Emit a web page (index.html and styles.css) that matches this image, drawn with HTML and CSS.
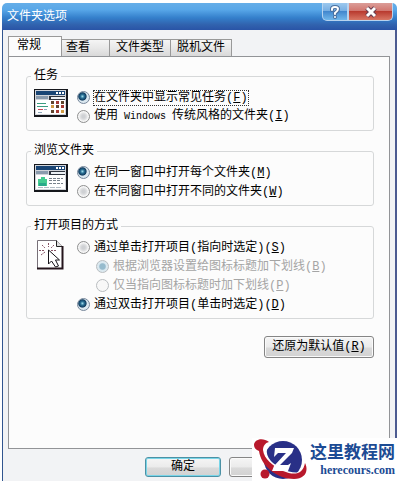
FILE: index.html
```html
<!DOCTYPE html>
<html lang="zh-CN">
	<head>
		<meta charset="UTF-8">
		<title>文件夹选项</title>
		<link rel="stylesheet" href="styles.css">
	</head>
	<body>
		<div class="window">
			<div class="titlebar">
				<h1 class="title">文件夹选项</h1>
				<div class="controls">
					<button type="button" class="help" aria-label="帮助">
						<svg width="12" height="14" viewBox="0 0 12 14" fill="none" stroke-linecap="round"><path d="M3 5V4q0-2 3-2t3 2-3 4v1" stroke="#4a6f9f" stroke-width="4"/><path d="M6 12v0" stroke="#4a6f9f" stroke-width="4"/><path d="M3 5V4q0-2 3-2t3 2-3 4v1M6 12v0" stroke="#fff" stroke-width="2"/></svg>
					</button>
					<button type="button" class="close" aria-label="关闭">
						<svg width="12" height="12" viewBox="0 0 12 12" fill="none"><path d="M2 2l8 8M10 2l-8 8" stroke="#653d4f" stroke-width="5"/><path d="M2 2l8 8M10 2l-8 8" stroke="#fff" stroke-width="3"/></svg>
					</button>
				</div>
			</div>
			<div class="main">
				<div class="tabs">
					<button type="button" class="tab active">常规</button>
					<button type="button" class="tab">查看</button>
					<button type="button" class="tab">文件类型</button>
					<button type="button" class="tab">脱机文件</button>
				</div>
				<div class="panel">
					<fieldset class="group">
						<legend>任务</legend>
						<div class="content">
							<svg class="icon" width="34" height="28" viewBox="0 0 34 28">
								<path d="M0 0h34v28H0z" fill="#15171c"/>
								<path d="M1 1h31v25H1z" fill="#d1d4da"/>
								<path d="M2 2h29v4H2z" fill="#194575"/>
								<path d="M22 3h2v2h-2zM25 3h2v2h-2zM28 3h2v2h-2z" fill="#fff"/>
								<path d="M2 7h12v3H2z" fill="#8a9bad"/>
								<path d="M15 7h16v4H15z" fill="#303640"/>
								<path d="M17 8h14v2H17z" fill="#edf1f5"/>
								<path d="M2 11h29v14H2z" fill="#fff"/>
								<path d="M3 14h9v1H3zM3 17h11v1H3z" fill="#3b9c80"/>
								<path d="M4 20h5v1H4z" fill="#ce4053"/>
								<path d="M10 20h3v1h-3zM4 23h4v1H4z" fill="#8fa8bc"/>
								<path d="M17 12h3v3h-3zM27 12h3v3h-3zM22 16h3v3h-3zM17 21h3v3h-3z" fill="#60452e"/>
								<path d="M22 12h3v3h-3zM27 16h3v3h-3zM22 21h3v3h-3z" fill="#a43b35"/>
								<path d="M17 16h3v3h-3zM27 21h3v3h-3z" fill="#d09b45"/>
							</svg>
							<div class="options">
								<label><input type="radio" name="task" checked><span class="focus">在文件夹中显示常见任务(<u>F</u>)</span></label>
								<label><input type="radio" name="task"><span>使用<span class="latin"> Windows </span>传统风格的文件夹(<u>I</u>)</span></label>
							</div>
						</div>
					</fieldset>
					<fieldset class="group">
						<legend>浏览文件夹</legend>
						<div class="content">
							<svg class="icon" width="34" height="28" viewBox="0 0 34 28">
								<path d="M0 0h34v28H0z" fill="#15171c"/>
								<path d="M1 1h31v25H1z" fill="#d1d4da"/>
								<path d="M2 2h29v4H2z" fill="#194575"/>
								<path d="M22 3h2v2h-2zM25 3h2v2h-2zM28 3h2v2h-2z" fill="#fff"/>
								<path d="M2 7h12v3H2z" fill="#8a9bad"/>
								<path d="M15 7h16v4H15z" fill="#303640"/>
								<path d="M17 8h14v2H17z" fill="#edf1f5"/>
								<path d="M2 11h29v14H2z" fill="#fff"/>
								<path d="M4 15h3v-2h4v2h2v7H4z" fill="#44cb91"/>
								<path d="M5 19h7v3H5z" fill="#2aa98a"/>
								<path d="M15 14.500h14M15 16.500h12M15 19.500h14" stroke="#77818b" stroke-dasharray="3 1"/>
								<path d="M4 23.500h24" stroke="#b3bdc6" stroke-dasharray="5 1"/>
							</svg>
							<div class="options">
								<label><input type="radio" name="browse" checked><span>在同一窗口中打开每个文件夹(<u>M</u>)</span></label>
								<label><input type="radio" name="browse"><span>在不同窗口中打开不同的文件夹(<u>W</u>)</span></label>
							</div>
						</div>
					</fieldset>
					<fieldset class="group">
						<legend>打开项目的方式</legend>
						<div class="content">
							<svg class="icon" width="34" height="32" viewBox="0 0 34 32">
								<path d="M3.500 1.500h19l6 6v22h-25z" fill="#fff" stroke="#777078"/>
								<path d="M22.500 1.500v6h6" fill="#ddd" stroke="#222"/>
								<path d="M28.500 7v22.500H3" fill="none" stroke="#24151c" stroke-width="2"/>
								<path d="M5 11.500h6M17 11.500h5M14.500 4v4M8 6l3 3M20 6l-3 3M7 16l4-3" stroke="#865264" stroke-dasharray="2 1"/>
								<path d="M14.500 11v14l3-3 4 6 3-1-3-6h4z" fill="#fff" stroke="#17151b"/>
							</svg>
							<div class="options">
								<label><input type="radio" name="open"><span>通过单击打开项目(指向时选定)(<u>S</u>)</span></label>
								<label class="sub"><input type="radio" name="underline" checked disabled><span>根据浏览器设置给图标标题加下划线(<u>B</u>)</span></label>
								<label class="sub"><input type="radio" name="underline" disabled><span>仅当指向图标标题时加下划线(<u>P</u>)</span></label>
								<label><input type="radio" name="open" checked><span>通过双击打开项目(单击时选定)(<u>D</u>)</span></label>
							</div>
						</div>
					</fieldset>
					<button type="button" class="btn restore">还原为默认值(<u>R</u>)</button>
				</div>
			</div>
			<div class="footer">
				<button type="button" class="btn ok">确定</button>
				<button type="button" class="btn" aria-label="取消"></button>
			</div>
		</div>
		<a class="brand" href="#">
			<svg width="56" height="42" viewBox="0 0 56 42">
				<circle cx="30" cy="22" r="19" fill="#293087"/>
				<path d="M13 8C9 17 15 26 27 32s22 6 26 0" fill="none" stroke="#fff" stroke-width="4"/>
				<path d="M1 7c0-6 9-8 15-3-4 1-6 4-6 8 1 9 10 16 20 21 12 5 20 3 22-8 4 8 0 16-11 16C24 41 8 28 6 13 3 12 1 10 1 7z" fill="#b8192c"/>
				<circle cx="12" cy="36" r="4.500" fill="#b8192c"/>
				<path d="M22 10h19l-2 5-12 12h8l3-2-3 8H19l2-5 12-13h-8l-4 4z" fill="#fff"/>
			</svg>
			<span class="brand-text">
				<span class="brand-name">这里教程网</span>
				<span class="brand-url">herecours.com</span>
			</span>
		</a>
	</body>
</html>
```
FILE: styles.css
```css
*{
	box-sizing: border-box;
}
body{
	margin: 0;
	background-color: #fff;
	font-family: "Liberation Mono", "Noto Sans CJK SC", monospace;
	font-size: 12px;
	line-height: 16px;
	color: #000;
}
button{
	margin: 0;
	padding: 0;
	font: inherit;
	color: inherit;
}
.window{
	display: flex;
	flex-direction: column;
	min-height: 100vh;
	padding: 3px 3px 0 2px;
}
.titlebar{
	display: flex;
	justify-content: space-between;
	height: 27px;
	padding: 0 4px 0 5px;
	border-radius: 5px 5px 0 0;
	background: linear-gradient(#65aee8, #58a7e8 25%, #347fcb 55%, #3163ae 80%, #2954a6);
}
.title{
	margin: 0;
	padding-top: 6px;
	font-size: 12px;
	font-weight: normal;
	color: #fff;
}
.controls{
	display: flex;
	height: 18px;
}
.controls button{
	display: flex;
	align-items: center;
	justify-content: center;
	border: 1px solid #b7d3ef;
	border-top: 0;
}
.help{
	width: 26px;
	border-radius: 0 0 0 5px;
	background: linear-gradient(#9cc8ee, #78afe3 45%, #4287ce 50%, #71b7eb);
}
.close{
	width: 45px;
	border-radius: 0 0 5px 0;
	background: linear-gradient(#dc9d98, #d17770 45%, #b93b30 50%, #d87765);
}
.main{
	display: flex;
	flex: 1;
	flex-direction: column;
	padding: 6px 5px 0 5px;
	border-left: 1px solid #31558f;
	border-right: 2px solid #4c5b91;
	background-color: #f2f3f5;
}
.tabs{
	display: flex;
	align-items: flex-end;
	height: 21px;
	margin-bottom: -1px;
}
.tab{
	height: 18px;
	padding: 0 6px;
	border: 1px solid #999;
	border-left-width: 0;
	background: linear-gradient(#f5f5f5, #e8e8e8 50%, #d9d9d9);
}
.tab.active{
	height: 21px;
	padding: 0 20px 3px 8px;
	border-left-width: 1px;
	border-bottom: 0;
	background: #fcfcfc;
}
.tab.active + .tab{
	padding: 0 19px 0 4px;
}
.panel{
	display: flex;
	flex: 1;
	flex-direction: column;
	gap: 12px;
	padding: 11px 15px 12px 17px;
	border: 1px solid #929497;
	background-color: #fcfcfc;
}
.group{
	min-width: 0;
	margin: 0;
	padding: 4px 6px 4px 7px;
	border: 1px solid #d6d8d9;
	border-radius: 3px;
}
.group legend{
	margin-left: -3px;
	padding: 0 3px;
}
.content{
	display: flex;
	gap: 9px;
}
.icon{
	flex: none;
	margin-top: 1px;
}
.options label{
	display: flex;
	align-items: center;
	gap: 4px;
	height: 19px;
	white-space: nowrap;
}
.options .sub{
	padding-left: 19px;
	color: #a5a5a5;
}
.focus{
	line-height: 14px;
	outline: 1px dotted #333;
}
.latin{
	font-size: 10px;
}
input[type=radio]{
	appearance: none;
	flex: none;
	width: 13px;
	height: 13px;
	margin: 0;
	border: 1px solid #8e8f8f;
	border-radius: 50%;
	background: radial-gradient(circle, #cfd1d4 20%, #e3e4e5 45%, #f7f7f7 60%);
}
input[type=radio]:checked{
	border-color: #77879a;
	background: radial-gradient(circle at 40% 40%, #a0dcea, #286f94 20%, #123d60 40%, #dbe8f0 50%);
}
input[type=radio]:disabled{
	border-color: #b9bdc0;
	background: #f8f8f8;
}
input[type=radio]:disabled:checked{
	background: radial-gradient(circle, #96bbcd 35%, #dbe9f0 50%);
}
.btn{
	width: 76px;
	height: 20px;
	border: 1px solid #858585;
	border-radius: 3px;
	background: linear-gradient(#f5f5f5, #ebebeb 50%, #dadada 55%, #d2d2d2);
	box-shadow: inset 0 0 0 1px #fafafa;
}
.restore{
	align-self: flex-end;
	width: 110px;
	height: 22px;
	margin-top: 5px;
}
.ok{
	border-color: #4c91a5;
	box-shadow: inset 0 0 0 1px #79d5e8;
}
.footer{
	display: flex;
	justify-content: flex-end;
	gap: 8px;
	padding: 8px 90px 4px 5px;
	border-left: 1px solid #31558f;
	border-right: 2px solid #4c5b91;
	background-color: #f2f3f5;
}
/* site mark lies over the corner of the dialog */
.brand{
	position: absolute;
	right: 0;
	bottom: 0;
	display: flex;
	align-items: flex-start;
	gap: 1px;
	height: 43px;
	padding: 0 5px 0 1px;
	background-color: #fff;
	color: #1c4b94;
	text-decoration: none;
}
.brand-text{
	display: flex;
	flex-direction: column;
	align-items: flex-end;
}
.brand-name{
	font: bold 17px/25px "Noto Sans CJK SC", sans-serif;
}
.brand-url{
	font: bold 12px/14px "Liberation Serif", serif;
}
```
